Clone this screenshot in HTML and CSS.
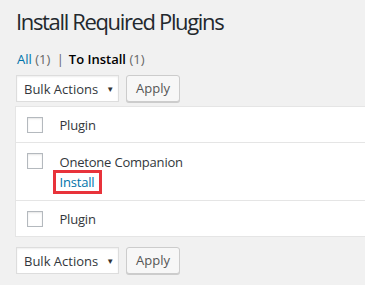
FILE: index.html
```html
<!DOCTYPE html>
<html lang="en">
<head>
    <meta charset="UTF-8">
    <link rel="stylesheet" href="styles.css">
    <title>Install Required Plugins</title>
</head>
<body>
    <div class="wrap">
        <h1 class="page-title">Install Required Plugins</h1>

        <ul class="subsubsub">
            <li><a href="#">All</a> <span class="count">(1)</span> <span class="sep">|</span></li>
            <li><a href="#" class="current">To Install</a> <span class="count">(1)</span></li>
        </ul>

        <div class="tablenav top">
            <div class="bulk-select">Bulk Actions <span class="arrow">&#9660;</span></div>
            <button class="apply">Apply</button>
        </div>

        <table class="plugins">
            <tr class="short">
                <td class="check"><span class="box"></span></td>
                <td class="name">Plugin</td>
            </tr>
            <tr>
                <td class="check"><span class="box"></span></td>
                <td class="name">
                    <div class="title">Onetone Companion</div>
                    <a href="#" class="install">Install</a>
                </td>
            </tr>
            <tr class="short">
                <td class="check"><span class="box"></span></td>
                <td class="name">Plugin</td>
            </tr>
        </table>

        <div class="tablenav bottom">
            <div class="bulk-select">Bulk Actions <span class="arrow">&#9660;</span></div>
            <button class="apply">Apply</button>
        </div>
    </div>
</body>
</html>
```

FILE: styles.css
```css
* {
    box-sizing: border-box;
}

body {
    margin: 0;
    background: #f1f1f1;
    font-family: "Open Sans", "Noto Sans", sans-serif;
    font-size: 13px;
    color: #444;
    overflow: hidden;
    width: 365px;
    height: 285px;
}

.wrap {
    padding: 0 0 0 15px;
    width: 420px;
}

.page-title {
    font-size: 22px;
    font-weight: 400;
    letter-spacing: -1.35px;
    color: #23282d;
    margin: 0;
    padding: 6px 0 0 1px;
    line-height: 30px;
}

.subsubsub {
    list-style: none;
    margin: 14px 0 0 2px;
    padding: 0;
    display: flex;
    gap: 5px;
    line-height: 18px;
    color: #666;
}

.subsubsub a {
    color: #0073aa;
    text-decoration: none;
}

.subsubsub a.current {
    color: #000;
    font-weight: 600;
}

.subsubsub .sep {
    margin-left: 3px;
}

.tablenav {
    display: flex;
    align-items: center;
    gap: 7px;
    padding-left: 1px;
}

.tablenav.top {
    margin-top: 7px;
}

.tablenav.bottom {
    margin-top: 10px;
}

.bulk-select {
    width: 103px;
    height: 27px;
    background: #fff;
    border: 1px solid #ddd;
    box-shadow: inset 0 1px 2px rgba(0, 0, 0, 0.07);
    padding: 0 0 0 7px;
    display: flex;
    align-items: center;
    color: #32373c;
}

.bulk-select .arrow {
    font-size: 8px;
    margin-left: 8px;
    color: #333;
}

.apply {
    font-family: inherit;
    font-size: 13px;
    color: #555;
    height: 27px;
    width: 54px;
    background: #f7f7f7;
    border: 1px solid #ccc;
    border-radius: 3px;
    box-shadow: 0 1px 0 #ccc;
    margin-top: -1px;
}

.plugins {
    border-collapse: collapse;
    background: #fff;
    border: 1px solid #e5e5e5;
    width: 400px;
    margin-top: 4px;
}

.plugins td {
    border-top: 1px solid #e5e5e5;
    vertical-align: top;
}

.plugins .check {
    width: 44px;
    padding: 10px 0 0 11px;
}

.plugins .box {
    display: block;
    width: 16px;
    height: 16px;
    border: 1px solid #b4b9be;
    box-shadow: inset 0 1px 2px rgba(0, 0, 0, 0.1);
}

.plugins .name {
    color: #32373c;
    padding: 9px 0 0 0;
    line-height: 18px;
    letter-spacing: -0.2px;
}

.plugins .short td {
    height: 36px;
}

.plugins .title {
    line-height: 20px;
}

.install {
    display: inline-block;
    color: #0073aa;
    text-decoration: none;
    border: 3px solid #e8333b;
    padding: 1px 5px 1px 4px;
    margin: -2px 0 6px -7px;
    line-height: 16px;
}
```
